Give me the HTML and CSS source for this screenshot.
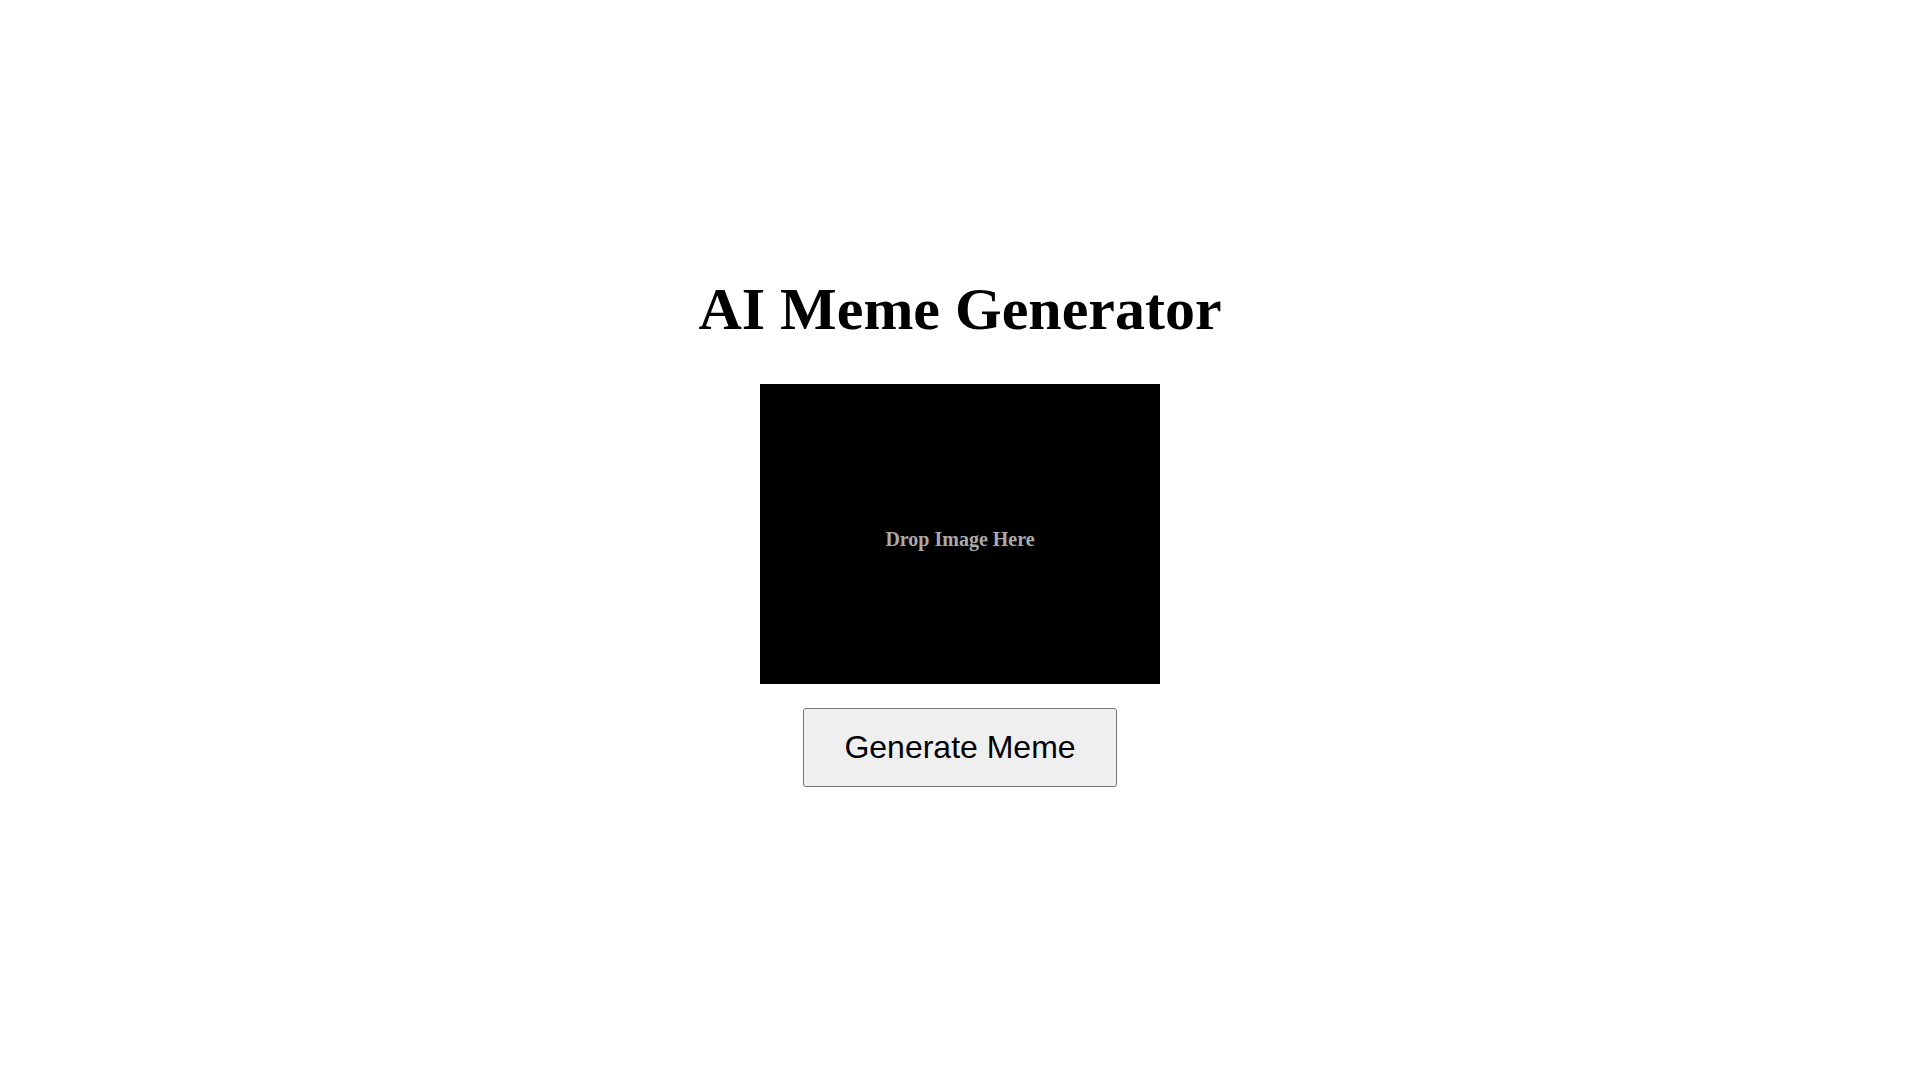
FILE: index.html
```html
<!DOCTYPE html>
<html lang="en">
<head>
<meta charset="utf-8">
<title>AI Meme Generator</title>
<link rel="stylesheet" href="styles.css">
</head>
<body>
<main class="app">
  <h1 class="title">AI Meme Generator</h1>
  <div class="dropzone"><span class="drop-text">Drop Image Here</span></div>
  <button class="generate" type="button">Generate Meme</button>
</main>
</body>
</html>
```

FILE: styles.css
```css
html, body {
  margin: 0;
  padding: 0;
  background: #ffffff;
}
.app {
  display: flex;
  flex-direction: column;
  align-items: center;
  padding-top: 275px;
  font-family: "Liberation Serif", "Times New Roman", serif;
}
.title {
  margin: 0;
  height: 69px;
  font-size: 60px;
  font-weight: bold;
  line-height: 69px;
  color: #000;
}
.dropzone {
  box-sizing: border-box;
  margin-top: 40px;
  width: 400px;
  height: 300px;
  padding-top: 10px;
  background: #000;
  display: flex;
  align-items: center;
  justify-content: center;
}
.drop-text {
  font-family: "Liberation Serif", "Times New Roman", serif;
  font-weight: bold;
  font-size: 20px;
  color: #aaaaaa;
}
.generate {
  margin-top: 24px;
  padding: 20px 40px;
  font-family: "Liberation Sans", Arial, sans-serif;
  font-size: 32px;
  color: #000;
  background: #efefef;
  border: 1px solid #767676;
  border-radius: 3px;
}
```
